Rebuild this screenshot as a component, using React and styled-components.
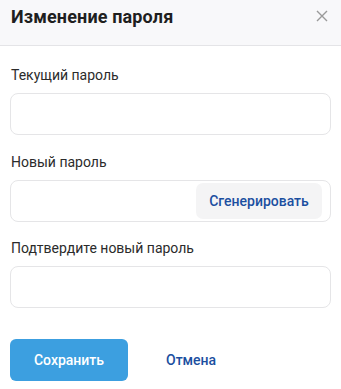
import React from "react";
import styled, { createGlobalStyle } from "styled-components";

const Global = createGlobalStyle`
  html, body { margin: 0; padding: 0; background: #fff; }
  body { font-family: Roboto, "Noto Sans", sans-serif; color: #222; }
  * { box-sizing: border-box; }
`;

const Modal = styled.div`
  width: 341px;
  background: #fff;
`;

const Header = styled.div`
  height: 46px;
  display: flex;
  align-items: flex-start;
  justify-content: space-between;
  padding: 5px 13px 0 11px;
  background: #f8f8fa;
  border-bottom: 1px solid #e4e4e7;
`;

const Title = styled.h2`
  margin: 0;
  font-size: 18px;
  font-weight: 700;
  letter-spacing: 0.15px;
  color: #1f1f1f;
  line-height: 24px;
`;

const Close = styled.button`
  border: 0;
  background: none;
  padding: 0;
  width: 12px;
  height: 12px;
  display: flex;
  margin-top: 5px;
  cursor: pointer;
`;

const Body = styled.div`
  padding: 19px 10px 8px 10px;
  display: flex;
  flex-direction: column;
`;

const Field = styled.div`
  display: flex;
  flex-direction: column;
  gap: 8px;
  margin-bottom: 16.5px;
`;

const Label = styled.label`
  font-size: 14px;
  line-height: 20px;
  color: #2b2b2b;
  padding-left: 1px;
`;

const InputBox = styled.div`
  height: 42px;
  border: 1px solid #e5e5e7;
  border-radius: 8px;
  display: flex;
  align-items: center;
  padding: 3px 8px 3px 0;
  background: #fff;
`;

const Input = styled.input`
  flex: 1;
  min-width: 0;
  height: 100%;
  border: 0;
  outline: none;
  background: transparent;
  padding: 0 12px;
  font: inherit;
`;

const Generate = styled.button`
  height: 36px;
  width: 126px;
  border: 0;
  border-radius: 7px;
  background: #f4f4f5;
  color: #1b4fa0;
  font-family: inherit;
  font-size: 14px;
  font-weight: 500;
  cursor: pointer;
`;

const Actions = styled.div`
  display: flex;
  align-items: center;
  gap: 38px;
  margin-top: 14px;
`;

const Primary = styled.button`
  width: 118px;
  height: 42px;
  border: 0;
  border-radius: 6px;
  background: #3c9fe0;
  color: #fff;
  font-family: inherit;
  font-size: 14px;
  font-weight: 500;
  cursor: pointer;
`;

const LinkButton = styled.button`
  border: 0;
  background: none;
  padding: 0;
  color: #1b4fa0;
  font-family: inherit;
  font-size: 14px;
  font-weight: 500;
  cursor: pointer;
`;

export default function App() {
  return (
    <>
      <Global />
      <Modal>
        <Header>
          <Title>Изменение пароля</Title>
          <Close aria-label="Закрыть">
            <svg width="12" height="12" viewBox="0 0 12 12">
              <path d="M1 1L11 11M11 1L1 11" stroke="#9a9a9a" strokeWidth="1.4" />
            </svg>
          </Close>
        </Header>
        <Body>
          <Field>
            <Label>Текущий пароль</Label>
            <InputBox>
              <Input type="password" />
            </InputBox>
          </Field>
          <Field>
            <Label>Новый пароль</Label>
            <InputBox>
              <Input type="password" />
              <Generate>Сгенерировать</Generate>
            </InputBox>
          </Field>
          <Field>
            <Label>Подтвердите новый пароль</Label>
            <InputBox>
              <Input type="password" />
            </InputBox>
          </Field>
          <Actions>
            <Primary>Сохранить</Primary>
            <LinkButton>Отмена</LinkButton>
          </Actions>
        </Body>
      </Modal>
    </>
  );
}
